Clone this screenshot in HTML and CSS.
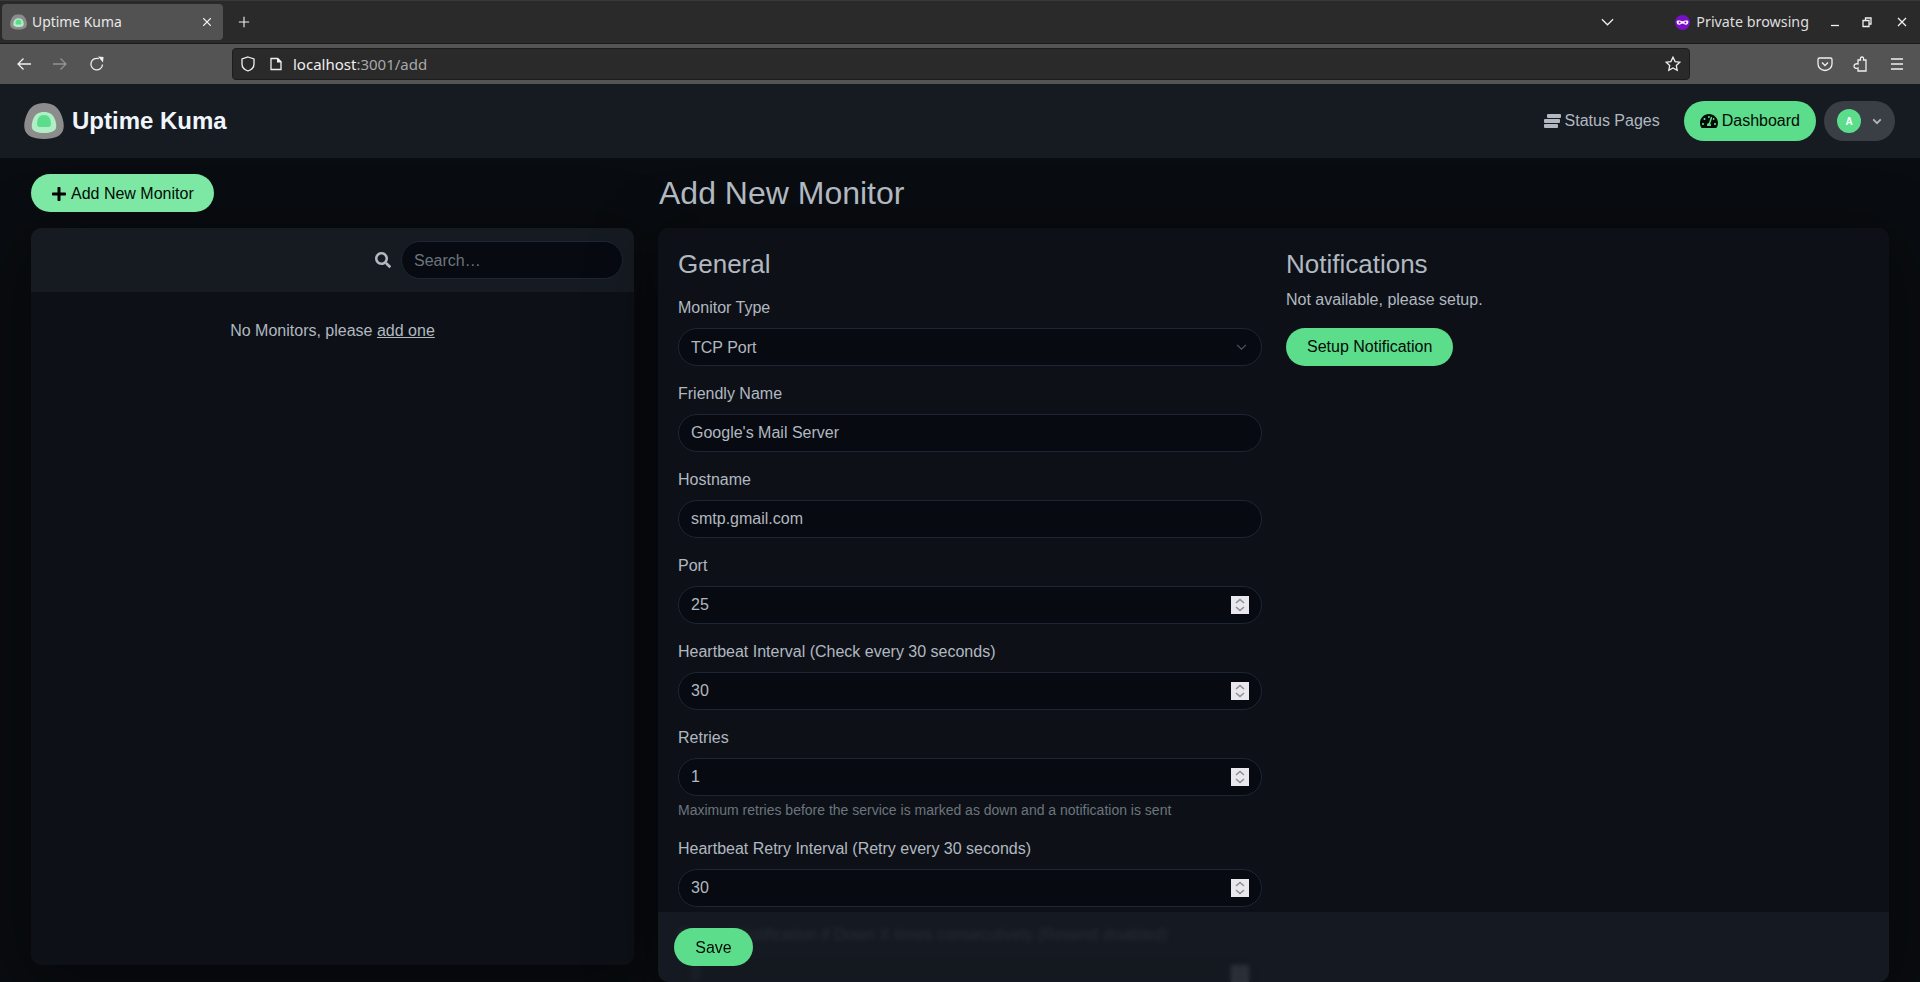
FILE: index.html
```html
<!DOCTYPE html>
<html lang="en">
<head>
    <meta charset="UTF-8">
    <meta name="viewport" content="width=device-width, initial-scale=1.0">
    <title>Uptime Kuma</title>
    <link rel="stylesheet" href="styles.css">
</head>
<body>
    <!-- browser chrome -->
    <div class="tabbar">
        <div class="tab">
            <svg class="favicon" viewBox="0 0 40 36"><use href="#kuma"/></svg>
            <span class="tab-title">Uptime Kuma</span>
            <svg class="tab-close" viewBox="0 0 12 12"><path d="M1.5 1.5l9 9M10.5 1.5l-9 9"/></svg>
        </div>
        <svg class="new-tab" viewBox="0 0 14 14"><path d="M7 1v12M1 7h12"/></svg>
        <div class="tabbar-space"></div>
        <svg class="tab-list" viewBox="0 0 14 8"><path d="M1 1l6 6 6-6"/></svg>
        <svg class="mask" viewBox="0 0 16 16">
            <circle cx="8" cy="8" r="8" fill="#7a0fc7"/>
            <path d="M1.8 6.4c1.6-.6 3.4-.6 4.6 0 .8.4 2.4.4 3.2 0 1.2-.6 3-.6 4.6 0 .3 2.2-.6 4-2.8 4-1.6 0-2-1.3-3.4-1.3s-1.8 1.3-3.4 1.3c-2.2 0-3.1-1.8-2.8-4z" fill="#fff"/>
            <circle cx="4.9" cy="8" r="1.1" fill="#7a0fc7"/>
            <circle cx="11.1" cy="8" r="1.1" fill="#7a0fc7"/>
        </svg>
        <span class="private-label">Private browsing</span>
        <svg class="win-btn win-min" viewBox="0 0 12 12"><path d="M2 9.5h8"/></svg>
        <svg class="win-btn win-max" viewBox="0 0 12 12"><path d="M2 4.5h6v6H2zM4.5 4.5V2H10v6H8"/></svg>
        <svg class="win-btn win-close" viewBox="0 0 12 12"><path d="M2 2l8 8M10 2l-8 8"/></svg>
    </div>

    <div class="toolbar">
        <svg class="tool tool-back" viewBox="0 0 16 16"><path d="M15 8H2M7.5 2.5L2 8l5.5 5.5"/></svg>
        <svg class="tool tool-forward" viewBox="0 0 16 16"><path d="M1 8h13M8.5 2.5L14 8l-5.5 5.5"/></svg>
        <svg class="tool tool-reload" viewBox="0 0 16 16"><path d="M13.5 8.5A5.8 5.8 0 1 1 9.8 2.7"/><path class="filled" d="M9 .5l5.5.5-.5 5.5z"/></svg>
        <div class="urlbar">
            <svg class="url-shield" viewBox="0 0 14 16"><path d="M7 1l6 2v5c0 3.5-2.5 5.8-6 7-3.5-1.2-6-3.5-6-7V3z"/></svg>
            <svg class="url-page" viewBox="0 0 12 14"><path d="M1 1.5h6.5L11 5v7.5H1z"/><path class="filled" d="M7 1h1l3.5 3.5v1H7z"/></svg>
            <span class="url-text">localhost<span class="url-dim">:3001/add</span></span>
            <svg class="url-star" viewBox="0 0 16 16"><path d="M8 1.2l2.1 4.4 4.7.6-3.5 3.3.9 4.8L8 12l-4.2 2.3.9-4.8L1.2 6.200l4.7-.6z"/></svg>
        </div>
        <svg class="tool tool-pocket" viewBox="0 0 16 16"><path d="M2.5 2h11A1.5 1.5 0 0 1 15 3.5V8a7 6.5 0 0 1-14 0V3.5A1.5 1.5 0 0 1 2.5 2z"/><path d="M5 6.5l3 3 3-3"/></svg>
        <svg class="tool tool-puzzle" viewBox="0 0 16 16"><path d="M6 4h2.5C8 1.5 9 1 10 1s2 .5 1.500 3H14v11H6v-3c-2 .8-4 .2-4-1.800S4 7.300 6 8z"/></svg>
        <svg class="tool tool-menu" viewBox="0 0 16 16"><path d="M2 3h12M2 8h12M2 13h12"/></svg>
    </div>

    <!-- app -->
    <header class="app-header">
        <a class="brand" href="#">
            <svg class="brand-logo" viewBox="0 0 40 36"><use href="#kuma"/></svg>
            <span class="brand-name">Uptime Kuma</span>
        </a>
        <nav class="nav-pills">
            <a class="nav-pill" href="#">
                <svg class="nav-icon nav-icon-stream" viewBox="0 0 17 14">
                    <rect x="3" y="0" width="14" height="4" rx="1"/>
                    <rect x="0" y="5" width="16" height="4" rx="1"/>
                    <rect x="0" y="10" width="14" height="4" rx="1"/>
                </svg>
                Status Pages
            </a>
            <a class="nav-pill nav-pill-active" href="#">
                <svg class="nav-icon" viewBox="0 0 576 512"><path d="M288 32C128.94 32 0 160.94 0 320c0 52.8 14.25 102.26 39.06 144.8 5.61 9.62 16.3 15.2 27.44 15.2h443c11.14 0 21.83-5.58 27.44-15.2C561.75 422.26 576 372.8 576 320c0-159.06-128.94-288-288-288zm0 64c14.71 0 26.58 10.13 30.32 23.65-1.11 2.26-2.64 4.23-3.45 6.67l-9.22 27.67c-5.13 3.49-10.97 6.01-17.64 6.01-17.67 0-32-14.33-32-32S270.33 96 288 96zM96 384c-17.67 0-32-14.33-32-32s14.33-32 32-32 32 14.33 32 32-14.33 32-32 32zm48-160c-17.67 0-32-14.33-32-32s14.33-32 32-32 32 14.33 32 32-14.33 32-32 32zm246.77-72.41l-61.33 184C343.13 347.33 352 364.54 352 384c0 11.72-3.38 22.55-8.88 32H232.88c-5.5-9.45-8.88-20.28-8.88-32 0-33.94 26.5-61.43 59.9-63.59l61.34-184.01c4.17-12.56 17.73-19.45 30.36-15.17 12.57 4.19 19.35 17.79 15.17 30.36zm14.66 57.2l15.52-46.55c3.47-1.29 7.13-2.23 11.05-2.23 17.67 0 32 14.33 32 32s-14.33 32-32 32c-11.38-.01-20.89-6.28-26.57-15.22zM480 384c-17.67 0-32-14.33-32-32s14.33-32 32-32 32 14.33 32 32-14.33 32-32 32z"/></svg>
                Dashboard
            </a>
            <button class="profile-btn" type="button">
                <span class="avatar">A</span>
                <svg class="profile-caret" viewBox="0 0 12 8"><path d="M1.5 1.5L6 6l4.5-4.5"/></svg>
            </button>
        </nav>
    </header>

    <main class="layout">
        <section class="side">
            <a class="btn btn-add" href="#">
                <svg class="btn-icon" viewBox="0 0 448 512"><path d="M416 208H272V64c0-17.67-14.33-32-32-32h-32c-17.67 0-32 14.33-32 32v144H32c-17.67 0-32 14.33-32 32v32c0 17.67 14.33 32 32 32h144v144c0 17.67 14.33 32 32 32h32c17.67 0 32-14.33 32-32V304h144c17.67 0 32-14.33 32-32v-32c0-17.67-14.33-32-32-32z"/></svg>
                Add New Monitor
            </a>
            <div class="card list-card">
                <div class="list-header">
                    <svg class="search-icon" viewBox="0 0 512 512"><path d="M505 442.7L405.3 343c-4.5-4.5-10.6-7-17-7H372c27.6-35.3 44-79.7 44-128C416 93.1 322.9 0 208 0S0 93.1 0 208s93.1 208 208 208c48.3 0 92.7-16.4 128-44v16.3c0 6.4 2.5 12.5 7 17l99.7 99.7c9.4 9.4 24.6 9.4 33.9 0l28.3-28.3c9.4-9.4 9.4-24.6.1-34zM208 336c-70.7 0-128-57.2-128-128 0-70.7 57.2-128 128-128 70.7 0 128 57.2 128 128 0 70.7-57.2 128-128 128z"/></svg>
                    <input class="control search-input" type="text" placeholder="Search…">
                </div>
                <p class="list-empty">No Monitors, please <a href="#">add one</a></p>
            </div>
        </section>

        <section class="content">
            <h1 class="page-title">Add New Monitor</h1>
            <form class="card form-card">
                <div class="form-cols">
                    <div class="form-col">
                        <h2 class="section-title">General</h2>

                        <div class="field">
                            <label class="field-label">Monitor Type</label>
                            <div class="control-wrap">
                                <select class="control">
                                    <option>TCP Port</option>
                                </select>
                                <svg class="select-caret" viewBox="0 0 12 8"><path d="M1 1l5 5 5-5"/></svg>
                            </div>
                        </div>

                        <div class="field">
                            <label class="field-label">Friendly Name</label>
                            <input class="control" type="text" value="Google's Mail Server">
                        </div>

                        <div class="field">
                            <label class="field-label">Hostname</label>
                            <input class="control" type="text" value="smtp.gmail.com">
                        </div>

                        <div class="field">
                            <label class="field-label">Port</label>
                            <div class="control-wrap">
                                <input class="control" type="text" value="25">
                                <svg class="spinner" viewBox="0 0 18 18"><use href="#spin"/></svg>
                            </div>
                        </div>

                        <div class="field">
                            <label class="field-label">Heartbeat Interval (Check every 30 seconds)</label>
                            <div class="control-wrap">
                                <input class="control" type="text" value="30">
                                <svg class="spinner" viewBox="0 0 18 18"><use href="#spin"/></svg>
                            </div>
                        </div>

                        <div class="field">
                            <label class="field-label">Retries</label>
                            <div class="control-wrap">
                                <input class="control" type="text" value="1">
                                <svg class="spinner" viewBox="0 0 18 18"><use href="#spin"/></svg>
                            </div>
                            <div class="field-help">Maximum retries before the service is marked as down and a notification is sent</div>
                        </div>

                        <div class="field">
                            <label class="field-label">Heartbeat Retry Interval (Retry every 30 seconds)</label>
                            <div class="control-wrap">
                                <input class="control" type="text" value="30">
                                <svg class="spinner" viewBox="0 0 18 18"><use href="#spin"/></svg>
                            </div>
                        </div>

                        <div class="field">
                            <label class="field-label">Resend Notification if Down X times consecutively (Resend disabled)</label>
                            <div class="control-wrap">
                                <input class="control" type="text" value="0">
                                <svg class="spinner" viewBox="0 0 18 18"><use href="#spin"/></svg>
                            </div>
                        </div>
                    </div>

                    <div class="form-col">
                        <h2 class="section-title">Notifications</h2>
                        <p class="notif-empty">Not available, please setup.</p>
                        <button class="btn btn-primary" type="button">Setup Notification</button>
                    </div>
                </div>

                <div class="form-footer">
                    <button class="btn btn-primary btn-save" type="button">Save</button>
                </div>
            </form>
        </section>
    </main>

    <svg class="defs" aria-hidden="true">
        <symbol id="kuma" viewBox="0 0 40 36">
            <path fill="#8c8c8c" d="M20 0c8 0 13.500 3.500 16.500 10 2.500 5.500 3.800 10.500 3 15.500C38.500 32.500 31 36 20 36S1.500 32.500.5 25.500C-.3 20.500 1 15.500 3.500 10 6.500 3.500 12 0 20 0z"/>
            <path fill="#b0efc6" d="M20 9c5.500 0 9 2.500 10.800 7 1.300 3.300 1.800 6.300 1.200 9-.8 3.200-5.500 5-12 5s-11.200-1.800-12-5c-.6-2.700-.1-5.700 1.200-9C11 11.500 14.500 9 20 9z"/>
            <path fill="#5cdd8b" d="M20 12c3.500 0 5.500 1.700 6.300 4.500.6 2 .8 4 .5 5.500-.3 1.400-1.300 2-2.800 2h-8c-1.500 0-2.500-.6-2.800-2-.3-1.500-.1-3.500.5-5.500.8-2.800 2.800-4.500 6.300-4.500z"/>
        </symbol>
        <symbol id="spin" viewBox="0 0 18 18">
            <rect width="18" height="18" fill="#e9e9ed"/>
            <path d="M5 7l4-3.500L13 7M5 11l4 3.500 4-3.500" fill="none" stroke="#8d8d99" stroke-width="1.5"/>
        </symbol>
    </svg>
</body>
</html>
```

FILE: styles.css
```css
* {
    margin: 0;
    padding: 0;
    box-sizing: border-box;
}

html, body {
    height: 100%;
    overflow: hidden;
}

body {
    display: flex;
    flex-direction: column;
    font-family: "Liberation Sans", Arial, sans-serif;
    font-size: 16px;
    line-height: 1.5;
    color: #b1b8c0;
    background: #090c10;
}

a {
    color: inherit;
    text-decoration: none;
}

.defs {
    position: absolute;
    width: 0;
    height: 0;
}

/* browser chrome */
.tabbar {
    flex: none;
    height: 44px;
    display: flex;
    align-items: center;
    background: #2b2a2b;
    border-top: 1px solid #3a393a;
    border-bottom: 1px solid #1b1b1c;
    font-family: "Noto Sans", sans-serif;
    color: #e8e8e8;
}

.tabbar svg,
.toolbar svg {
    flex: none;
    fill: none;
    stroke: #f0f0f0;
    stroke-width: 1.3;
}

.tabbar svg .filled,
.toolbar svg .filled {
    fill: #f0f0f0;
    stroke: none;
}

.tab {
    width: 221px;
    height: 36px;
    margin-left: 2px;
    padding: 0 10px 0 8px;
    display: flex;
    align-items: center;
    background: #525252;
    border-radius: 4px;
}

.tabbar svg.favicon {
    width: 17px;
    height: 16px;
    stroke: none;
}

.tab-title {
    flex: 1;
    margin-left: 5px;
    font-size: 13.9px;
}

.tab-close {
    width: 10px;
    height: 10px;
    margin-right: 1px;
}

.new-tab {
    width: 12px;
    height: 12px;
    margin-left: 15px;
}

.tabbar-space {
    flex: 1;
}

.tab-list {
    width: 13px;
    height: 8px;
    margin-right: 61px;
}

.tabbar svg.mask {
    width: 15px;
    height: 15px;
    stroke: none;
}

.private-label {
    margin-left: 6px;
    font-size: 14.3px;
    color: #dedede;
}

.win-btn {
    width: 12px;
    height: 12px;
}

.win-min {
    margin-left: 20px;
}

.win-max {
    margin-left: 20px;
}

.win-close {
    margin-left: 23px;
    margin-right: 12px;
}

.toolbar {
    flex: none;
    height: 40px;
    display: flex;
    align-items: center;
    background: #545454;
}

.tool {
    width: 16px;
    height: 16px;
}

.tool-back {
    margin-left: 16px;
}

.tool-forward {
    margin-left: 20px;
    opacity: 0.4;
}

.tool-reload {
    margin-left: 21px;
}

.urlbar {
    width: 1458px;
    height: 32px;
    margin-left: 127px;
    padding: 0 8px;
    display: flex;
    align-items: center;
    background: #2a2a2b;
    border: 1px solid #1c1c1d;
    border-radius: 4px;
}

.url-shield {
    width: 14px;
    height: 16px;
}

.url-page {
    width: 12px;
    height: 14px;
    margin-left: 15px;
}

.url-text {
    flex: 1;
    margin-left: 11px;
    font-family: "Noto Sans", sans-serif;
    font-size: 15px;
    color: #f0f0f0;
}

.url-dim {
    color: #a8a8a8;
}

.url-star {
    width: 16px;
    height: 16px;
}

.tool-pocket {
    margin-left: 127px;
}

.tool-puzzle {
    margin-left: 19px;
}

.tool-menu {
    margin-left: 21px;
}

/* app header */
.app-header {
    flex: none;
    height: 74px;
    padding: 0 25px 0 24px;
    display: flex;
    align-items: center;
    justify-content: space-between;
    background: #161b22;
}

.brand {
    display: flex;
    align-items: center;
    color: #f0f6fc;
}

.brand-logo {
    width: 40px;
    height: 36px;
}

.brand-name {
    margin-left: 8px;
    font-size: 24px;
    font-weight: bold;
}

.nav-pills {
    display: flex;
    align-items: center;
    gap: 8px;
}

.nav-pill {
    height: 40px;
    padding: 8px 16px;
    display: flex;
    align-items: center;
    border-radius: 50rem;
}

.nav-icon {
    width: 18px;
    height: 16px;
    margin-right: 4px;
    fill: currentColor;
}

.nav-icon-stream {
    width: 17px;
    height: 14px;
}

.nav-pill-active {
    background: #5cdd8b;
    color: #020b05;
}

.profile-btn {
    width: 71px;
    height: 40px;
    padding-left: 13px;
    display: flex;
    align-items: center;
    background: #3a3e45;
    border: none;
    border-radius: 50rem;
}

.avatar {
    width: 24px;
    height: 24px;
    display: flex;
    align-items: center;
    justify-content: center;
    background: #5cdd8b;
    border-radius: 50%;
    color: #fff;
    font-family: "Liberation Sans", sans-serif;
    font-size: 10px;
    font-weight: bold;
}

.profile-caret {
    width: 10px;
    height: 7px;
    margin-left: 11px;
    fill: none;
    stroke: #b1b8c0;
    stroke-width: 2.2;
}

/* page layout */
.layout {
    flex: 1;
    min-height: 0;
    padding: 16px 31px 0;
    display: grid;
    grid-template-columns: 603px 1fr;
    gap: 24px;
}

.side,
.content {
    min-height: 0;
    display: flex;
    flex-direction: column;
}

.card {
    background: #0d1117;
    border-radius: 10px;
    box-shadow: 0 15px 70px rgba(0, 0, 0, 0.45);
}

.btn {
    position: relative;
    z-index: 1;
    height: 38px;
    padding: 6px 20px;
    display: inline-flex;
    align-items: center;
    align-self: flex-start;
    border: 1px solid transparent;
    border-radius: 50rem;
    font-family: inherit;
    font-size: 16px;
    color: #020b05;
}

.btn-primary {
    background: #5cdd8b;
}

.btn-add {
    padding: 7px 19px 5px 20px;
    background: #7ce8a4;
    margin-bottom: 16px;
}

.btn-icon {
    width: 14px;
    height: 16px;
    margin-right: 5px;
}

.btn-save {
    min-width: 79px;
    padding-top: 7px;
    padding-bottom: 5px;
    justify-content: center;
}

.control {
    display: block;
    width: 100%;
    height: 38px;
    padding: 6px 12px;
    background: #070a10;
    border: 1px solid #1d2634;
    border-radius: 2rem;
    font-family: inherit;
    font-size: 16px;
    color: #b1b8c0;
    outline: none;
    appearance: none;
}

.control::placeholder {
    color: #6c757d;
    opacity: 1;
}

/* monitor list */
.list-card {
    height: calc(100vh - 245px);
    overflow: hidden;
}

.list-header {
    height: 64px;
    padding-right: 11px;
    display: flex;
    align-items: center;
    justify-content: flex-end;
    gap: 10px;
    background: #161b22;
}

.search-icon {
    width: 16px;
    height: 16px;
    fill: #b1b8c0;
}

.search-input {
    width: 222px;
    padding-top: 7px;
    padding-bottom: 5px;
}

.list-empty {
    margin-top: 27px;
    text-align: center;
}

.list-empty a {
    text-decoration: underline;
}

/* form */
.page-title {
    position: relative;
    z-index: 1;
    margin-bottom: 16px;
    padding-left: 1px;
    font-size: 32px;
    font-weight: 400;
    line-height: 38px;
}

.form-card {
    position: relative;
    flex: 1;
    min-height: 0;
    padding: 20px;
    overflow: hidden;
}

.form-cols {
    display: grid;
    grid-template-columns: 584px 1fr;
    gap: 24px;
}

.section-title {
    margin-top: 1px;
    margin-bottom: 8px;
    font-size: 26px;
    font-weight: 400;
    line-height: 31px;
}

.field {
    margin-top: 16px;
}

.field-label {
    display: block;
    margin-bottom: 8px;
}

.control-wrap {
    position: relative;
}

.select-caret {
    position: absolute;
    top: 16px;
    right: 15px;
    width: 11px;
    height: 7px;
    fill: none;
    stroke: #4e5661;
    stroke-width: 1.3;
}

.spinner {
    position: absolute;
    top: 10px;
    right: 13px;
    width: 18px;
    height: 18px;
}

.field-help {
    margin-top: 4px;
    font-size: 14px;
    color: #6c757d;
}

.notif-empty {
    margin-bottom: 16px;
}

.form-footer {
    position: absolute;
    left: 0;
    right: 0;
    bottom: 0;
    height: 70px;
    padding: 16px;
    background: rgba(22, 27, 34, 0.9);
    backdrop-filter: blur(2px);
}
```
